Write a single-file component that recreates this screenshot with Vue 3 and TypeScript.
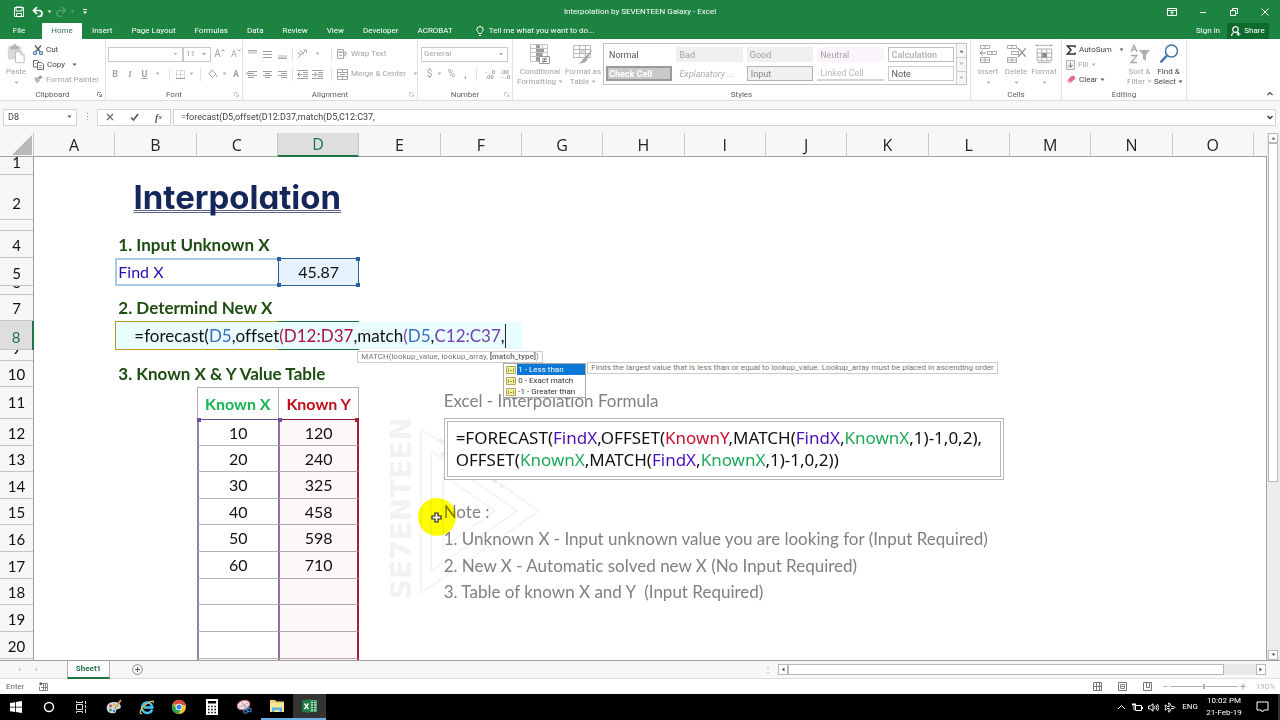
<script setup lang="ts">
import { ref } from 'vue'

interface Seg { t: string; k?: string }
interface Cell { id: string; span: number; cls: string; segs: Seg[] }
interface Row { n: number; h: number; label: string; tall: boolean; cells: Cell[] }

const cols = 'ABCDEFGHIJKLMNO'.split('')
const heights = [18, 45, 11, 27, 28, 9, 26, 29, 11, 26, 32, 27, 26, 27, 26, 27, 27, 26, 27, 27, 27]

const content: Record<string, { segs: Seg[]; cls?: string; span?: number }> = {
  B2: { segs: [{ t: 'Interpolation' }], cls: 'title', span: 3 },
  B4: { segs: [{ t: '1. Input Unknown X' }], cls: 'heading' },
  B5: { segs: [{ t: 'Find X' }], cls: 'find', span: 2 },
  D5: { segs: [{ t: '45.87' }], cls: 'center ref' },
  B7: { segs: [{ t: '2. Determind New X' }], cls: 'heading' },
  B8: { segs: [], cls: 'editing', span: 2 },
  D8: { segs: [], cls: 'active' },
  B10: { segs: [{ t: '3. Known X & Y Value Table' }], cls: 'heading' },
  C11: { segs: [{ t: 'Known X' }], cls: 'center known green' },
  D11: { segs: [{ t: 'Known Y' }], cls: 'center known red' },
  E11: { segs: [], cls: 'anchor' },
  F11: { segs: [{ t: 'Excel - Interpolation Formula' }], cls: 'grey anchor raised' },
  F15: { segs: [{ t: 'Note :' }], cls: 'grey anchor' },
  F16: { segs: [{ t: '1. Unknown X - Input unknown value you are looking for (Input Required)' }], cls: 'grey' },
  F17: { segs: [{ t: '2. New X - Automatic solved new X (No Input Required)' }], cls: 'grey' },
  F18: { segs: [{ t: '3. Table of known X and Y  (Input Required)' }], cls: 'grey' },
}
const data = [[10, 120], [20, 240], [30, 325], [40, 458], [50, 598], [60, 710]]

const rows: Row[] = heights.map((h, i) => {
  const n = i + 1
  const cells: Cell[] = []
  for (let c = 0; c < cols.length; c++) {
    const id = cols[c] + n
    const e = content[id]
    let cls = e?.cls ?? ''
    let segs = e?.segs ?? []
    if (n >= 12 && (c === 2 || c === 3)) {
      cls = 'center anchor ' + (c === 2 ? 'xs' : 'ys') + (n === 12 ? ' first' : '')
      const d = data[n - 12]
      if (d) segs = [{ t: String(d[c - 2]) }]
    }
    cells.push({ id, span: e?.span ?? 1, cls, segs })
    if (e?.span) c += e.span - 1
  }
  return { n, h, label: n === 3 ? '' : String(n), tall: n === 2 || n === 11, cells }
})

const editSegs: Seg[] = [
  { t: '=forecast(' }, { t: 'D5', k: 'c-blue' }, { t: ',offset' }, { t: '(D12:D37', k: 'c-crimson' },
  { t: ',match' }, { t: '(', k: 'c-purple' }, { t: 'D5', k: 'c-blue' }, { t: ',' }, { t: 'C12:C37', k: 'c-purple' }, { t: ',' },
]
const boxLines: Seg[][] = [
  [{ t: '=FORECAST(' }, { t: 'FindX', k: 'c-violet' }, { t: ',OFFSET(' }, { t: 'KnownY', k: 'c-red' }, { t: ',MATCH(' },
    { t: 'FindX', k: 'c-violet' }, { t: ',' }, { t: 'KnownX', k: 'c-green' }, { t: ',1)-1,0,2),' }],
  [{ t: 'OFFSET(' }, { t: 'KnownX', k: 'c-green' }, { t: ',MATCH(' }, { t: 'FindX', k: 'c-violet' }, { t: ',' },
    { t: 'KnownX', k: 'c-green' }, { t: ',1)-1,0,2))' }],
]
const matchTypes = ['1 - Less than', '0 - Exact match', '-1 - Greater than']
const tabs = ['File', 'Home', 'Insert', 'Page Layout', 'Formulas', 'Data', 'Review', 'View', 'Developer', 'ACROBAT']
const styles = ['Normal', 'Bad', 'Good', 'Neutral', 'Calculation', 'Check Cell', 'Explanatory ...', 'Input', 'Linked Cell', 'Note']
const formula = ref('=forecast(D5,offset(D12:D37,match(D5,C12:C37,')
const nameBox = ref('D8')
const zoom = ref(50)

const g = 'fill="none" stroke="#a8a8a8"'
const lines = (ys: number[][]) => ys.map(([y, a, b]) => `<path d="M${a} ${y}.5H${b}" stroke="#a0a0a0"/>`).join('')
const icons: Record<string, [number, number, string]> = {
  save: [12, 12, '<path d="M1.5 1.5h9v9h-9z" fill="none" stroke="#fff"/><path d="M3 1h6v4H3z" fill="none" stroke="#fff"/><path d="M3.500 11V7.500h5V11" fill="none" stroke="#fff"/>'],
  undo: [12, 12, '<path d="M5 1L1.500 4.500 5 8M2 4.500h5a3 3 0 0 1 0 6H5.500" fill="none" stroke="#fff" stroke-width="1.700"/>'],
  redo: [12, 12, '<path d="M7 1l3.500 3.500L7 8M10 4.500H5a3 3 0 0 0 0 6h1.500" fill="none" stroke="#4fa06c" stroke-width="1.500"/>'],
  caretW: [5, 4, '<path d="M.5 .5h4L2.500 3z" fill="#e4f2e8"/>'],
  caretG: [5, 4, '<path d="M.5 .5h4L2.500 3z" fill="#55a572"/>'],
  custom: [6, 6, '<path d="M1 .5h4" stroke="#fff"/><path d="M1 2.500h4L3 5z" fill="#fff"/>'],
  caret: [5, 4, '<path d="M.5 .5h4L2.500 3z" fill="#5a5a5a"/>'],
  caretL: [5, 4, '<path d="M.5 .5h4L2.500 3z" fill="#b4b4b4"/>'],
  chevU: [6, 5, '<path d="M.5 4L3 1.500 5.500 4" fill="none" stroke="#444" stroke-width="1.200"/>'],
  chevD: [6, 5, '<path d="M.5 1L3 3.500 5.500 1" fill="none" stroke="#333" stroke-width="1.400"/>'],
  tri: [5, 4, '<path d="M.5 3.500h4L2.500 1z" fill="#666"/>'],
  triL: [4, 5, '<path d="M3.500 .5v4L1 2.500z" fill="#444"/>'],
  triR: [4, 5, '<path d="M.5 .5v4L3 2.500z" fill="#444"/>'],
  navL: [4, 5, '<path d="M3.500 .5v4L1 2.500z" fill="#c8c8c8"/>'],
  navR: [4, 5, '<path d="M.5 .5v4L3 2.500z" fill="#c8c8c8"/>'],
  grow: [4, 3, '<path d="M.5 2.500L2 .8 3.500 2.500" fill="none" stroke="#999"/>'],
  shrink: [4, 3, '<path d="M.5 .5L2 2.200 3.500 .5" fill="none" stroke="#999"/>'],
  opts: [10, 8, '<path d="M.5 .5h9v7h-9zM.5 2.500h9" fill="none" stroke="#fff"/><path d="M5 7V3.500M3.500 5L5 3.500 6.500 5" fill="none" stroke="#fff"/>'],
  min: [8, 8, '<path d="M1 4.500h6" stroke="#fff"/>'],
  max: [8, 8, '<path d="M.5 2.500h5v5h-5zM2.500 2.500v-2h5v5h-2" fill="none" stroke="#fff"/>'],
  close: [8, 8, '<path d="M.5 .5l7 7M7.500 .5l-7 7" stroke="#fff"/>'],
  bulb: [8, 11, '<path d="M2.800 7.500C2.800 6 .8 5.500 .8 3.700a3.200 3.200 0 0 1 6.400 0C7.200 5.500 5.200 6 5.200 7.500zM2.800 9.500h2.400" fill="none" stroke="#fff"/>'],
  person: [10, 10, '<circle cx="4.500" cy="3.500" r="2.800" fill="none" stroke="#fff" stroke-width="1.200"/><path d="M.5 10c0-2 1-3 2.500-3.500M6 6.500l1 .5M5.500 8h4M7.500 6v4" fill="none" stroke="#fff" stroke-width="1.200"/>'],
  paste: [20, 22, '<path d="M1 3h15v14H1z" fill="#d9d9d9"/><path d="M4 2h9v4H4z" fill="#b4b4b4"/><path d="M6.500 2a2 2 0 0 1 4 0" fill="#b4b4b4"/><path d="M9.500 8.500h6l3.500 3.500v8.500H9.500z" fill="#fff" stroke="#b8b8b8"/><path d="M15.500 8.500V12H19" fill="none" stroke="#b8b8b8"/>'],
  cut: [10, 10, '<path d="M2 .5l5 6M8 .5l-5 6" stroke="#555" stroke-width="1.300"/><circle cx="2" cy="8" r="1.500" fill="none" stroke="#3c7ab8" stroke-width="1.200"/><circle cx="8" cy="8" r="1.500" fill="none" stroke="#3c7ab8" stroke-width="1.200"/>'],
  copy: [11, 10, '<path d="M.5 .5h4l1.500 1.500v5H.5z" fill="#fff" stroke="#6a6a6a"/><path d="M4.500 2.500h4l2 2v5h-6z" fill="#fff" stroke="#6a6a6a"/><path d="M6 5.500h3M6 7.500h3M2 3.500h1.500" stroke="#9a9a9a"/>'],
  painter: [10, 9, '<path d="M5 2l3-1.500 1.500 2-3 2z" fill="#999"/><path d="M1 3l4-1 2 3.500-3 3L2.500 6z" fill="#b8b8b8"/>'],
  launch: [5, 5, '<path d="M.5 4V.5H4M2 2l2.500 2.500M4.500 2v2.500H2" fill="none" stroke="#777" stroke-width=".8"/>'],
  launchL: [5, 5, '<path d="M.5 4V.5H4M2 2l2.500 2.500M4.500 2v2.500H2" fill="none" stroke="#c4c4c4" stroke-width=".8"/>'],
  border: [9, 9, '<path d="M.5 .5h8v8h-8zM4.500 .5v8M.5 4.500h8" fill="none" stroke="#bbb" stroke-dasharray="1 1"/><path d="M0 8.500h9" stroke="#999"/>'],
  fill: [10, 10, `<path d="M4 1l4 4-3.500 3.500L1 5z" ${g}/><path d="M8.500 5.500q1.500 2 0 2.500-1.200-.5 0-2.500" fill="#a8a8a8"/>`],
  alT: [9, 9, '<path d="M0 1h9v3H0z" fill="#d8d8d8"/><path d="M0 .5h9" stroke="#aaa"/>'],
  alM: [9, 9, lines([[1, 0, 9], [4, 0, 9], [7, 0, 9]])],
  alB: [9, 9, '<path d="M0 5h9v3H0z" fill="#d8d8d8"/><path d="M0 8.500h9" stroke="#aaa"/>'],
  left: [9, 9, lines([[1, 0, 9], [3, 0, 6], [5, 0, 9], [7, 0, 6]])],
  mid: [9, 9, lines([[1, 0, 9], [3, 2, 7], [5, 0, 9], [7, 2, 7]])],
  right: [9, 9, lines([[1, 0, 9], [3, 3, 9], [5, 0, 9], [7, 3, 9]])],
  orient: [11, 10, '<path d="M1 9L9 1M6.500 1H9.500V4" fill="none" stroke="#a8a8a8"/><path d="M1 3.500l3 3M3 1.500l4 4" stroke="#bbb" stroke-width="1.500"/>'],
  outd: [11, 9, lines([[0, 0, 11], [2, 6, 11], [4, 6, 11], [6, 6, 11], [8, 0, 11]]) + '<path d="M3 2L.5 4.500 3 7M1 4.500h4" fill="none" stroke="#999"/>'],
  ind: [11, 9, lines([[0, 0, 11], [2, 6, 11], [4, 6, 11], [6, 6, 11], [8, 0, 11]]) + '<path d="M2.500 2L5 4.500 2.500 7M0 4.500h4" fill="none" stroke="#999"/>'],
  wrap: [11, 10, `<path d="M.5 .5h6v9h-6zM2 3.500h3M2 6.500h3M.5 3h8.500v3H7M8 4.500L6.500 6 8 7.500" ${g}/>`],
  merge: [11, 11, `<path d="M.5 .5h10v10H.5zM.5 3.500h10M.5 7.500h10M5.500 .5v3M5.500 7.500v3M3 5.500h5" ${g}/>`],
  cond: [20, 20, '<path d="M.5 .5h17v17H.5zM.5 4.500h17M.5 8.500h17M.5 12.500h17M6.500 .5v17M12.500 .5v17" fill="none" stroke="#c4c4c4"/><path d="M6 1h4v3H6zM6 5h8v3H6zM6 9h6v3H6zM6 13h3v4H6z" fill="#9c9c9c"/><path d="M9.500 12.500h10v7h-10z" fill="#fff" stroke="#999"/><path d="M12 15h5M12 17.500h5M16 13.500l-3 5" stroke="#777"/>'],
  ftable: [20, 20, '<path d="M.5 1.500h17v12H.5zM.5 5.500h17M.5 9.500h17M6.500 1.500v12M12.500 1.500v12" fill="none" stroke="#b8b8b8"/><path d="M7 6h5v3H7z" fill="#ddd"/><path d="M19.500 5L12 13.500l2 1.500z" fill="#999"/><path d="M12 13.500l2.500 2q-1 4-9.500 4 4-1.500 4.500-4z" fill="#aaa"/>'],
  insert: [18, 20, `<path d="M1.500 1.500h9v3h-9zM6 1.500v3M8.500 7.500h9v3h-9zM13 7.500v3M1.500 13.500h9v5h-9zM6 13.500v5M1.500 16h9" ${g}/><path d="M1 9h6M3.500 6.500L1 9l2.500 2.500" fill="none" stroke="#888"/>`],
  del: [20, 20, `<path d="M1.500 1.500h9v3h-9zM6 1.500v3M5.500 7.500h7v3h-7zM1.500 13.500h9v5h-9zM6 13.500v5M1.500 16h9" ${g}/><path d="M12 4l8 9M20 4l-8 9" stroke="#999" stroke-width="1.400"/>`],
  format: [20, 22, `<path d="M2.500 5.500h16v13h-16zM2.500 10h16M2.500 14.500h16M7.500 5.500v13M13 5.500v13M1 1.500h18M3 0L1 1.500 3 3M17 0l2 1.500L17 3M3 20.500h14" ${g}/><path d="M8 10h5v5H8z" fill="#888"/>`],
  sigma: [10, 10, '<path d="M9 2.500V1H1.500L5 5 1.500 9H9V7.500" fill="none" stroke="#333" stroke-width="1.500"/>'],
  fdown: [9, 10, '<path d="M.5 .5h8v9h-8z" fill="#eee" stroke="#b4b4b4"/><path d="M4.500 2.500V7M2.500 5l2 2.500 2-2.500" fill="none" stroke="#888"/>'],
  eraser: [10, 9, '<path d="M4.500 1.500L8 .5l1.500 3L5 7.500 1.500 5.500z" fill="#e2708f"/><path d="M1.500 5.500L5 7.500 3.500 8.500 1 7.500z" fill="#f3bccb"/>'],
  sort: [20, 20, '<path d="M1 8l3-7 3 7M2 5.500h4M1 11.500h6L1 18.500h6" fill="none" stroke="#a8a8a8" stroke-width="1.300"/><path d="M9 6h11l-4 5v6l-3-2v-4z" fill="#b0b0b0"/>'],
  find: [20, 20, '<circle cx="12.500" cy="7" r="6" fill="#fff" stroke="#3b72b0" stroke-width="1.500"/><path d="M8 11.500L1.500 18.500" stroke="#3b72b0" stroke-width="2.500"/>'],
  x: [8, 8, '<path d="M1 1l6 6M7 1L1 7" stroke="#666" stroke-width="1.200"/>'],
  check: [9, 8, '<path d="M1 4.500l2.500 2.500L8 1" fill="none" stroke="#555" stroke-width="1.600"/>'],
  plus: [11, 11, '<circle cx="5.500" cy="5.500" r="4.800" fill="#fff" stroke="#777" stroke-width=".9"/><path d="M5.500 3v5M3 5.500h5" stroke="#555"/>'],
  macro: [9, 9, '<path d="M2.500 1.500h6v7h-8v-4M2 5.500h6M4.500 2v6M6.500 2v6" fill="none" stroke="#888"/><circle cx="1.800" cy="1.800" r="1.500" fill="#666"/>'],
  vNormal: [9, 9, '<path d="M.5 .5h8v8h-8zM.5 4.500h8M3.500 .5v8M6.500 .5v8" fill="none" stroke="#777"/>'],
  vPage: [9, 9, '<path d="M.5 .5h8v8h-8z" fill="none" stroke="#777"/><path d="M2.500 2.500h4v4h-4zM3 4.500h3" fill="none" stroke="#888"/>'],
  vBreak: [9, 9, '<path d="M.5 .5h8v8h-8zM3.500 .5v5h3v-5" fill="none" stroke="#777"/>'],
  pick: [10, 8, '<path d="M.5 .5h9v7h-9z" fill="#f6efa0" stroke="#b3a85c"/><path d="M2 5.500h1M4 4.500h2M7 5.500h1M2.500 2.500v3M7.500 2.500v3" stroke="#9c9550"/>'],
  win: [12, 12, '<path d="M0 2l5-.8v4.600H0zM5.800 1L12 0v5.800H5.800zM0 6.500h5v4.600L0 10.300zM5.800 6.500H12V12l-6.200-.9z" fill="#fff"/>'],
  cortana: [12, 12, '<circle cx="6" cy="6" r="4.500" fill="none" stroke="#fff" stroke-width="1.400"/>'],
  task: [12, 12, '<path d="M1.500 3.500h6v5h-6zM1.500 0v1.500h6V0M1.500 12v-1.500h6V12" fill="none" stroke="#ddd"/><path d="M10.500 0v3M10.500 4v3M10.500 8v4" stroke="#ddd"/>'],
  paint: [16, 16, '<path d="M8 3C3 3 0 6 .8 10c.6 4 5 5 8 4 2-.8.5-2.500 2-3.500s4 .2 4-3C14.800 5 12 3 8 3z" fill="#c5dbe8"/><circle cx="4.500" cy="7" r="1.400" fill="#d3473c"/><circle cx="8" cy="5.500" r="1.200" fill="#e8b33d"/><circle cx="4.500" cy="11" r="1.400" fill="#4b9b57"/><circle cx="8" cy="12" r="1.200" fill="#3d76c4"/><path d="M15 1L8.500 10" stroke="#dca052" stroke-width="1.800"/>'],
  ie: [16, 16, '<path d="M13.200 10.500A5.300 5.300 0 1 1 13.500 8.500H5" fill="none" stroke="#49c5f1" stroke-width="2.400"/><path d="M3 14.500C0 15.500 1 11 4.500 7.500S15.500-.5 14.300 4" fill="none" stroke="#f2c84a" stroke-width="1.200"/>'],
  chrome: [16, 16, '<circle cx="8" cy="8" r="7" fill="#f4c432"/><path d="M8 8L2 4.300A7 7 0 0 1 14.800 6H8z" fill="#dd4b3e"/><path d="M2 4.300A7 7 0 0 0 7.300 15L10.500 9.500 8 8 5 9z" fill="#2fa455"/><circle cx="8" cy="8" r="3.300" fill="#fff"/><circle cx="8" cy="8" r="2.500" fill="#4285e8"/>'],
  calc: [14, 16, '<path d="M1 0h12v16H1z" fill="#fff"/><path d="M3 2h8v2.500H3z" fill="#000"/><path d="M3 7.500h8M3 10.500h8M3 13.500h8" stroke="#000" stroke-width="1.500" stroke-dasharray="1.500 1.700"/>'],
  snip: [16, 16, '<ellipse cx="7.500" cy="6" rx="6.500" ry="4.500" transform="rotate(-20 7.500 6)" fill="#f0e2e4" stroke="#c66e78"/><path d="M3 8l9-4M6 3l4 6" stroke="#d08a92" stroke-width=".8"/><circle cx="9.500" cy="12.500" r="1.800" fill="none" stroke="#3a7cc0" stroke-width="1.300"/><circle cx="13.500" cy="11" r="1.800" fill="none" stroke="#3a7cc0" stroke-width="1.300"/><path d="M10 11L8.500 7M12.500 9.500L10 6.500" stroke="#7b9fc4"/>'],
  folder: [16, 14, '<path d="M1 1h5l1.500 1.500H15V13H1z" fill="#f5d26b"/><path d="M1 4h14v9H1z" fill="#fbe596"/><path d="M3 13V8.500h10V13h-2.500v-2h-5v2z" fill="#57b4de"/>'],
  excel: [16, 14, '<path d="M8 1.500h6.500v11H8z" fill="#217346" stroke="#4ea673"/><path d="M9 3.500h2M12 3.500h2M9 6h2M12 6h2M9 8.500h2M12 8.500h2M9 11h2M12 11h2" stroke="#c9e6d4" stroke-width="1.300"/><path d="M0 1.500L8.500 0v14L0 12.500z" fill="#1e7d45"/><path d="M2.500 4.500l4 5.500M6.500 4.500l-4 5.500" stroke="#fff" stroke-width="1.300"/>'],
  up: [9, 6, '<path d="M1 5l3.500-3.500L8 5" fill="none" stroke="#fff"/>'],
  batt: [11, 9, '<path d="M3.500 2.500h6v5h-6zM10.500 4v2" fill="none" stroke="#fff"/><path d="M0 1.500h4M1 0v3M3 0v3M2 3v4" stroke="#fff"/>'],
  vol: [11, 9, '<path d="M.5 3h2L5 .8v7.400L2.500 6h-2z" fill="none" stroke="#fff"/><path d="M6.500 3q1 1.500 0 3M8 2q1.800 2.500 0 5M9.500 1q2.500 3.500 0 7" fill="none" stroke="#fff" stroke-width=".9"/>'],
  plane: [12, 11, '<path d="M11 5.500q-.5-1-2-1H7.500L5.500 1H4.500l.8 3.500H3L1.800 3H1l.7 2.500L1 8h.8L3 6.500h2.300L4.500 10h1l2-3.500H9q1.500 0 2-1z" fill="none" stroke="#fff" stroke-width=".9"/>'],
  notif: [13, 12, '<path d="M1 1h11v8H8L6.500 11 5 9H1z" fill="none" stroke="#fff"/>'],
  cross: [11, 11, '<path d="M4 1h3v3h3v3H7v3H4V7H1V4h3z" fill="#fff" stroke="#222" stroke-width="1.200"/>'],
}
const box = (k: string) => `0 0 ${icons[k][0]} ${icons[k][1]}`
const apps = ['win', 'cortana', 'task', 'paint', 'ie', 'chrome', 'calc', 'snip', 'folder', 'excel']
const appNames = ['Start', 'Search', 'Task view', 'Paint', 'Internet Explorer', 'Chrome', 'Calculator', 'Snipping Tool', 'Explorer', 'Excel']
</script>

<template>
  <div class="app">
    <header class="titlebar">
      <div class="quick">
        <button v-for="k in ['save', 'undo', 'caretW', 'redo', 'caretG', 'custom']" :key="k" :aria-label="k"><svg :width="icons[k][0]" :height="icons[k][1]" :viewBox="box(k)" v-html="icons[k][2]" /></button>
      </div>
      <div class="doc">Interpolation by SEVENTEEN Galaxy - Excel</div>
      <div class="wins">
        <button v-for="k in ['opts', 'min', 'max', 'close']" :key="k" :aria-label="k"><svg :width="icons[k][0]" :height="icons[k][1]" :viewBox="box(k)" v-html="icons[k][2]" /></button>
      </div>
    </header>
    <nav class="tabs">
      <button v-for="t in tabs" :key="t" :class="{ on: t === 'Home', file: t === 'File' }">{{ t }}</button>
      <button class="tell"><svg width="8" height="11" :viewBox="box('bulb')" v-html="icons.bulb[2]" />Tell me what you want to do...</button>
      <span class="grow"></span>
      <button>Sign in</button>
      <button class="share"><svg width="10" height="10" :viewBox="box('person')" v-html="icons.person[2]" />Share</button>
    </nav>

    <section class="ribbon">
      <div class="group clip">
        <div class="body">
          <button class="big dim"><svg width="20" height="22" :viewBox="box('paste')" v-html="icons.paste[2]" />Paste<svg width="5" height="4" :viewBox="box('caretL')" v-html="icons.caretL[2]" /></button>
          <div class="stack">
            <button><svg width="10" height="10" :viewBox="box('cut')" v-html="icons.cut[2]" />Cut</button>
            <button><svg width="11" height="10" :viewBox="box('copy')" v-html="icons.copy[2]" />Copy<svg class="drop" width="5" height="4" :viewBox="box('caret')" v-html="icons.caret[2]" /></button>
            <button class="dim"><svg width="10" height="9" :viewBox="box('painter')" v-html="icons.painter[2]" />Format Painter</button>
          </div>
        </div>
        <div class="label">Clipboard<svg width="5" height="5" :viewBox="box('launch')" v-html="icons.launch[2]" /></div>
      </div>

      <div class="group font dim">
        <div class="body rows">
          <div class="r1">
            <select class="fname" aria-label="Font"><option></option></select>
            <select class="fsize" aria-label="Font size"><option>11</option></select>
            <button class="ga">A<svg width="4" height="3" :viewBox="box('grow')" v-html="icons.grow[2]" /></button>
            <button class="gb">A<svg width="4" height="3" :viewBox="box('shrink')" v-html="icons.shrink[2]" /></button>
          </div>
          <div class="r2">
            <button><b>B</b></button><button><b><i class="ser">I</i></b></button><button><b><u>U</u></b></button>
            <svg width="5" height="4" :viewBox="box('caretL')" v-html="icons.caretL[2]" /><i class="sep"></i>
            <button aria-label="Borders"><svg width="9" height="9" :viewBox="box('border')" v-html="icons.border[2]" /></button>
            <svg width="5" height="4" :viewBox="box('caretL')" v-html="icons.caretL[2]" /><i class="sep"></i>
            <button aria-label="Fill"><svg width="10" height="10" :viewBox="box('fill')" v-html="icons.fill[2]" /></button>
            <svg width="5" height="4" :viewBox="box('caretL')" v-html="icons.caretL[2]" />
            <button><b>A</b></button>
            <svg width="5" height="4" :viewBox="box('caretL')" v-html="icons.caretL[2]" />
          </div>
        </div>
        <div class="label">Font<svg width="5" height="5" :viewBox="box('launchL')" v-html="icons.launchL[2]" /></div>
      </div>

      <div class="group align dim">
        <div class="body rows">
          <div class="r3">
            <button v-for="k in ['alT', 'alM', 'alB']" :key="k" :aria-label="k"><svg width="9" height="9" :viewBox="box(k)" v-html="icons[k][2]" /></button>
            <i class="sep"></i>
            <button aria-label="Orientation"><svg width="11" height="10" :viewBox="box('orient')" v-html="icons.orient[2]" /></button>
            <svg width="5" height="4" :viewBox="box('caretL')" v-html="icons.caretL[2]" /><i class="sep"></i>
            <button class="wide"><svg width="11" height="10" :viewBox="box('wrap')" v-html="icons.wrap[2]" />Wrap Text</button>
          </div>
          <div class="r3">
            <button v-for="k in ['left', 'mid', 'right']" :key="k" :aria-label="k"><svg width="9" height="9" :viewBox="box(k)" v-html="icons[k][2]" /></button>
            <i class="sep"></i>
            <button v-for="k in ['outd', 'ind']" :key="k" :aria-label="k"><svg width="11" height="9" :viewBox="box(k)" v-html="icons[k][2]" /></button>
            <i class="sep"></i>
            <button class="wide"><svg width="11" height="11" :viewBox="box('merge')" v-html="icons.merge[2]" />Merge &amp; Center<svg class="drop" width="5" height="4" :viewBox="box('caretL')" v-html="icons.caretL[2]" /></button>
          </div>
        </div>
        <div class="label">Alignment<svg width="5" height="5" :viewBox="box('launchL')" v-html="icons.launchL[2]" /></div>
      </div>

      <div class="group number dim">
        <div class="body rows">
          <div class="r0"><select class="fmt" aria-label="Number format"><option>General</option></select></div>
          <div class="r4">
            <button class="sym">$</button><svg width="5" height="4" :viewBox="box('caretL')" v-html="icons.caretL[2]" /><button class="sym">%</button><button class="sym"><b>,</b></button><i class="sep"></i>
            <button class="dec">←.0<br>.00</button><button class="dec">.00<br>→.0</button>
          </div>
        </div>
        <div class="label">Number<svg width="5" height="5" :viewBox="box('launchL')" v-html="icons.launchL[2]" /></div>
      </div>

      <div class="group styles dim">
        <div class="body">
          <button class="big cf"><svg width="20" height="20" :viewBox="box('cond')" v-html="icons.cond[2]" />Conditional<span>Formatting <svg width="5" height="4" :viewBox="box('caretL')" v-html="icons.caretL[2]" /></span></button>
          <button class="big ft"><svg width="20" height="20" :viewBox="box('ftable')" v-html="icons.ftable[2]" />Format as<span>Table <svg width="5" height="4" :viewBox="box('caretL')" v-html="icons.caretL[2]" /></span></button>
          <div class="gallery">
            <div class="swatches">
              <button v-for="(s, i) in styles" :key="s" :class="'s' + i">{{ s }}</button>
            </div>
            <div class="spin">
              <button aria-label="Up"><svg width="5" height="4" :viewBox="box('tri')" v-html="icons.tri[2]" /></button>
              <button aria-label="Down"><svg width="5" height="4" :viewBox="box('caretL')" v-html="icons.caretL[2]" /></button>
              <button aria-label="More"><svg width="5" height="4" :viewBox="box('caretL')" v-html="icons.caretL[2]" /></button>
            </div>
          </div>
        </div>
        <div class="label">Styles</div>
      </div>

      <div class="group cells dim">
        <div class="body even">
          <button class="big"><svg width="18" height="20" :viewBox="box('insert')" v-html="icons.insert[2]" />Insert<svg width="5" height="4" :viewBox="box('caretL')" v-html="icons.caretL[2]" /></button>
          <button class="big"><svg width="20" height="20" :viewBox="box('del')" v-html="icons.del[2]" />Delete<svg width="5" height="4" :viewBox="box('caretL')" v-html="icons.caretL[2]" /></button>
          <button class="big"><svg width="20" height="20" :viewBox="box('format')" v-html="icons.format[2]" />Format<svg width="5" height="4" :viewBox="box('caretL')" v-html="icons.caretL[2]" /></button>
        </div>
        <div class="label">Cells</div>
      </div>

      <div class="group edit">
        <div class="body">
          <div class="stack">
            <button><svg width="10" height="10" :viewBox="box('sigma')" v-html="icons.sigma[2]" />AutoSum<svg class="drop" width="5" height="4" :viewBox="box('caret')" v-html="icons.caret[2]" /></button>
            <button class="dim"><svg width="9" height="10" :viewBox="box('fdown')" v-html="icons.fdown[2]" />Fill<svg width="5" height="4" :viewBox="box('caretL')" v-html="icons.caretL[2]" /></button>
            <button><svg width="10" height="9" :viewBox="box('eraser')" v-html="icons.eraser[2]" />Clear<svg width="5" height="4" :viewBox="box('caret')" v-html="icons.caret[2]" /></button>
          </div>
          <button class="big sf dim"><svg width="20" height="20" :viewBox="box('sort')" v-html="icons.sort[2]" />Sort &amp;<span>Filter <svg width="5" height="4" :viewBox="box('caretL')" v-html="icons.caretL[2]" /></span></button>
          <button class="big sf"><svg width="20" height="20" :viewBox="box('find')" v-html="icons.find[2]" />Find &amp;<span>Select <svg width="5" height="4" :viewBox="box('caret')" v-html="icons.caret[2]" /></span></button>
        </div>
        <div class="label">Editing</div>
      </div>
      <div class="rest"><button aria-label="Collapse ribbon"><svg width="6" height="5" :viewBox="box('chevU')" v-html="icons.chevU[2]" /></button></div>
    </section>

    <section class="fbar">
      <div class="namebox"><input v-model="nameBox" aria-label="Name box"><svg width="5" height="4" :viewBox="box('caret')" v-html="icons.caret[2]" /></div>
      <span class="dots">⋮</span>
      <div class="fbtns">
        <button aria-label="Cancel"><svg width="8" height="8" :viewBox="box('x')" v-html="icons.x[2]" /></button>
        <button aria-label="Enter"><svg width="9" height="8" :viewBox="box('check')" v-html="icons.check[2]" /></button>
        <button class="fx">f<small>x</small></button>
      </div>
      <div class="finput"><input v-model="formula" aria-label="Formula"><svg width="6" height="5" :viewBox="box('chevD')" v-html="icons.chevD[2]" /></div>
    </section>

    <main class="sheet">
      <div class="grid">
        <table>
          <colgroup><col class="rh"><col v-for="c in cols" :key="c"><col class="tail"></colgroup>
          <thead>
            <tr>
              <th class="corner"><svg width="20" height="20" viewBox="0 0 20 20"><path d="M20 0v20H0z" fill="#b9b9b9" /></svg></th>
              <th v-for="c in cols" :key="c" :class="{ sel: c === 'D' }">{{ c }}</th>
              <th class="last"></th>
            </tr>
          </thead>
          <tbody>
            <tr v-for="r in rows" :key="r.n">
              <th :class="{ sel: r.n === 8 }"><div class="rl" :class="{ tall: r.tall }" :style="{ height: r.h + 'px' }">{{ r.label }}</div></th>
              <td v-for="c in r.cells" :key="c.id" :colspan="c.span" :class="c.cls">
                <template v-if="c.id === 'E11'">
                  <div class="mark">SE7ENTEEN</div>
                  <svg class="tri" width="126" height="174" viewBox="0 0 126 174"><g fill="none" stroke="#f5f5f5" stroke-width="2"><path d="M2 4l118 82L2 168z" /><path d="M12 26l86 60-86 60z" /><path d="M24 50l52 36-52 36z" /></g><path d="M20 14l64 48M22 28l30 24" stroke="#ececec" stroke-width="3" stroke-dasharray="6 5" /></svg>
                </template>
                <span v-for="(s, i) in c.segs" :key="i" class="txt">{{ s.t }}</span>
                <template v-if="c.id === 'D5'"><i class="h tl blue"></i><i class="h tr blue"></i><i class="h bl blue"></i><i class="h br blue"></i></template>
                <i v-if="c.id === 'C12'" class="h tl purple"></i>
                <template v-if="c.id === 'D12'"><i class="h tl purple"></i><i class="h tr crimson"></i></template>
                <template v-if="c.id === 'B8'">
                  <div class="editor"><span v-for="(s, i) in editSegs" :key="i" :class="s.k">{{ s.t }}</span><i class="beam"></i></div>
                  <div class="tip fn">MATCH(lookup_value, lookup_array, <b>[match_type]</b>)</div>
                  <ul class="menu">
                    <li v-for="(m, i) in matchTypes" :key="m" :class="{ on: i === 0 }"><svg width="10" height="8" :viewBox="box('pick')" v-html="icons.pick[2]" />{{ m }}</li>
                  </ul>
                  <div class="tip desc">Finds the largest value that is less than or equal to lookup_value. Lookup_array must be placed in ascending order</div>
                </template>
                <div v-if="c.id === 'F11'" class="fbox">
                  <div v-for="(l, i) in boxLines" :key="i"><span v-for="(s, j) in l" :key="j" :class="s.k">{{ s.t }}</span></div>
                </div>
                <div v-if="c.id === 'F15'" class="spot"><svg width="11" height="11" :viewBox="box('cross')" v-html="icons.cross[2]" /></div>
              </td>
              <td class="blank"></td>
            </tr>
          </tbody>
        </table>
      </div>
      <div class="vbar">
        <button aria-label="Scroll up"><svg width="5" height="4" :viewBox="box('tri')" v-html="icons.tri[2]" /></button>
        <div class="thumb"></div>
        <button class="down" aria-label="Scroll down"><svg width="5" height="4" :viewBox="box('caret')" v-html="icons.caret[2]" /></button>
      </div>
    </main>

    <section class="sheets">
      <div class="navs">
        <button aria-label="Previous sheet"><svg width="4" height="5" :viewBox="box('navL')" v-html="icons.navL[2]" /></button>
        <button aria-label="Next sheet"><svg width="4" height="5" :viewBox="box('navR')" v-html="icons.navR[2]" /></button>
      </div>
      <button class="stab">Sheet1</button>
      <button class="add" aria-label="New sheet"><svg width="11" height="11" :viewBox="box('plus')" v-html="icons.plus[2]" /></button>
      <span class="grow"></span>
      <span class="dots">⋮</span>
      <div class="hbar">
        <button aria-label="Scroll left"><svg width="4" height="5" :viewBox="box('triL')" v-html="icons.triL[2]" /></button>
        <div class="thumb"></div>
        <button class="end" aria-label="Scroll right"><svg width="4" height="5" :viewBox="box('triR')" v-html="icons.triR[2]" /></button>
      </div>
    </section>

    <section class="status">
      <span>Enter</span>
      <svg class="macro" width="9" height="9" :viewBox="box('macro')" v-html="icons.macro[2]" />
      <span class="grow"></span>
      <div class="views">
        <button v-for="k in ['vNormal', 'vPage', 'vBreak']" :key="k" :aria-label="k"><svg width="9" height="9" :viewBox="box(k)" v-html="icons[k][2]" /></button>
      </div>
      <button class="zb">−</button>
      <input v-model="zoom" type="range" aria-label="Zoom">
      <button class="zb">+</button>
      <span class="pct">190%</span>
    </section>

    <footer class="taskbar">
      <div class="apps">
        <button v-for="(k, i) in apps" :key="k" class="appb" :class="{ open: i > 7, current: i === 9 }" :aria-label="appNames[i]"><svg :width="icons[k][0]" :height="icons[k][1]" :viewBox="box(k)" v-html="icons[k][2]" /></button>
      </div>
      <span class="grow"></span>
      <div class="tray">
        <button v-for="k in ['up', 'batt', 'vol', 'plane']" :key="k" :aria-label="k"><svg :width="icons[k][0]" :height="icons[k][1]" :viewBox="box(k)" v-html="icons[k][2]" /></button>
      </div>
      <span class="lang">ENG</span>
      <div class="clock"><div>10:02 PM</div><div>21-Feb-19</div></div>
      <button class="notif" aria-label="Notifications"><svg width="13" height="12" :viewBox="box('notif')" v-html="icons.notif[2]" /></button>
    </footer>
  </div>
</template>

<style>
body { margin: 0; overflow: hidden; }
</style>

<style scoped>
.app { height: 100vh; display: flex; flex-direction: column; background: #fff; font-family: Roboto, "Open Sans", sans-serif; font-size: 8px; line-height: 10px; color: #444; overflow: hidden; }
.app * { box-sizing: border-box; }
button { border: 0; padding: 0; margin: 0; background: none; font: inherit; color: inherit; display: flex; align-items: center; justify-content: center; white-space: nowrap; }
input, select { font: inherit; color: inherit; border: 0; padding: 0; margin: 0; background: none; outline: 0; min-width: 0; }
svg { flex: none; display: block; }
.grow { flex: 1; }

.titlebar { display: grid; grid-template-columns: 1fr auto 1fr; align-items: center; height: 23px; background: #1c8341; color: #fff; flex: none; }
.quick { display: grid; grid-template-columns: 20px 18px 5px 18px 5px 20px; padding-left: 9px; height: 20px; align-items: center; }
.wins { display: grid; grid-template-columns: repeat(4, 31px); justify-content: end; height: 20px; }
.doc { padding-top: 1px; }
.tabs { display: flex; height: 16px; background: #1c8341; color: #fff; flex: none; padding-right: 11px; }
.tabs button { padding: 0 9px 0 10px; }
.tabs button.file { width: 42px; padding-right: 14px; }
.tabs button.on { background: #fff; color: #2f7a4b; width: 40px; padding: 0; }
.tabs button.tell { gap: 5px; padding-left: 14px; }
.tabs button.share { background: #0d6a2f; gap: 3px; padding: 0 5px; width: 42px; }
.tabs button:nth-last-child(2) { padding: 0 7px; }

.ribbon { display: flex; height: 62px; flex: none; border-bottom: 1px solid #dcdcdc; background: #fff; }
.group { display: flex; flex-direction: column; border-right: 1px solid #e2e2e2; flex: none; padding-top: 3px; }
.dim { color: #a3a3a3; }
.body { flex: 1; display: flex; }
.label { position: relative; height: 11px; text-align: center; color: #606060; line-height: 11px; }
.label svg { position: absolute; right: 3px; top: 3px; }
.big { flex-direction: column; justify-content: flex-start; padding-top: 2px; line-height: 10px; }
.big > svg:first-child { height: 20px; margin-bottom: 3px; }
.big > svg:last-child { margin-top: 4px; }
.big span { display: flex; align-items: center; gap: 2px; }
.stack { display: grid; grid-template-rows: repeat(3, 15px); justify-items: start; }
.stack button { gap: 3px; }
.drop { margin-left: 4px; }
.clip { width: 106px; }
.clip .big { width: 33px; padding-right: 1px; }
.font { width: 137px; }
.rows { flex-direction: column; padding-top: 2px; }
.rows > div { height: 20px; }
.r0 { display: flex; align-items: center; }
.r1 { display: grid; grid-template-columns: 75px 28px 17px 16px; align-items: center; padding-left: 2px; }
select { appearance: none; height: 15px; border: 1px solid #c9c9c9; padding-left: 2px; background: linear-gradient(45deg, transparent 50%, #b8b8b8 50%) right 6px center / 2px 2px no-repeat, linear-gradient(-45deg, transparent 50%, #b8b8b8 50%) right 4px center / 2px 2px no-repeat, #fff; }
.ga { font-size: 10px; }
.gb { font-size: 9px; }
.ga svg, .gb svg { align-self: flex-start; }
.r2 { display: grid; grid-template-columns: 14px 16px 13px 12px 12px 10px 13px 5px 19px 5px 18px 5px; justify-items: center; align-items: center; padding-left: 2px; }
.r2 button { font-size: 9px; }
.ser { font-family: "Liberation Serif", serif; }
.sep { width: 1px; height: 13px; background: #e2e2e2; }
.align { width: 175px; }
.r3 { display: grid; grid-template-columns: 15px 15px 15px 5px 15px 15px 12px 1fr; padding-left: 2px; align-items: center; justify-items: center; }
.r3 .wide { justify-self: start; gap: 3px; }
.number { width: 95px; }
.fmt { width: 87px; margin-left: 3px; }
.r4 { display: grid; grid-template-columns: 15px 5px 19px 9px 13px 13px 17px; padding-left: 4px; align-items: center; justify-items: center; }
.sym { font-size: 10px; }
.dec { font-size: 6px; line-height: 5px; font-weight: bold; }
.styles { flex: 1; }
.styles .body { padding-left: 4px; }
.cf { width: 46px; }
.ft { width: 40px; }
.gallery { flex: 1; display: flex; border: 1px solid #c0c0c0; height: 42px; margin: 1px 3px 0 0; }
.swatches { flex: 1; display: grid; grid-template-columns: repeat(5, 1fr); grid-template-rows: 15px 15px; gap: 4px; padding: 3px 2px; }
.swatches button { justify-content: flex-start; padding-left: 3px; font-size: 9px; }
.swatches .s0 { color: #555; }
.s1, .s2 { background: #f0f0f2; }
.s3 { background: #fbf4fb; }
.swatches .s4 { border: 1px solid #bbb; font-weight: bold; color: #b8b8b8; }
.swatches .s5 { background: #c8c8c8; border: 2px solid #9a9a9a; color: #fff; font-weight: bold; padding-left: 1px; }
.swatches .s6 { font-style: italic; color: #b0b0b0; }
.swatches .s7 { background: #f0f0f2; border: 1px solid #b4b4b4; color: #888; }
.swatches .s8 { border-bottom: 2px solid #d4d4d4; color: #b8b8b8; }
.swatches .s9 { border: 1px solid #ccc; color: #555; }
.spin { width: 10px; display: grid; grid-template-rows: repeat(3, 1fr); background: #f6f6f6; border-left: 1px solid #ccc; }
.spin button + button { border-top: 1px solid #ccc; }
.cells { width: 91px; }
.even { display: grid; grid-template-columns: repeat(3, 28px); padding-left: 3px; }
.edit { width: 125px; }
.edit .stack { width: 63px; padding-left: 4px; }
.sf { width: 29px; }
.rest { width: 93px; display: flex; align-items: flex-end; justify-content: flex-end; padding: 0 7px 4px 0; }

.fbar { height: 32px; flex: none; display: flex; align-items: center; background: #f7f7f7; padding: 0 4px 0 3px; font-size: 9px; }
.fbar > div { height: 17px; background: #fff; border: 1px solid #d4d4d4; display: flex; align-items: center; }
.namebox { width: 74px; padding: 0 4px; }
.namebox input { flex: 1; }
.dots { width: 20px; text-align: center; color: #999; }
.fbtns { width: 74px; justify-content: space-around; margin-right: 2px; }
.fx { font: italic bold 10px "Liberation Serif", serif; color: #555; }
.fx small { font-size: 7px; }
.finput { flex: 1; padding: 0 2px 0 7px; }
.finput input { flex: 1; }

.sheet { flex: 1; min-height: 0; display: flex; background: #f7f7f7; overflow: hidden; }
.grid { flex: 1; min-width: 0; overflow: hidden; position: relative; background: #fff; }
table { table-layout: fixed; width: 100%; border-collapse: separate; border-spacing: 0; font-family: Lato, sans-serif; font-size: 16px; font-variant-ligatures: none; line-height: 20px; color: #111; }
.rh { width: 34px; }
.tail { width: 13px; }
th, td { padding: 0; font-weight: normal; white-space: nowrap; }
thead th { height: 24px; background: #f7f7f7; border-right: 1px solid #c8c8c8; border-bottom: 1px solid #a0a0a0; font-family: "Open Sans", sans-serif; line-height: 22px; color: #222; }
thead th.last { border-right: 0; }
thead th.sel { background: #dedede; color: #217346; border-bottom: 2px solid #217346; }
.corner svg { margin: 1px 1px 0 auto; }
tbody th { background: #f7f7f7; border-right: 1px solid #a0a0a0; font-size: 15px; }
tbody th.sel { background: #dedede; color: #217346; border-right: 2px solid #217346; }
.rl { overflow: hidden; display: flex; align-items: flex-end; justify-content: center; border-bottom: 1px solid #c4c4c4; line-height: 24px; }
.rl.tall { padding-bottom: 4px; }
td { vertical-align: middle; padding-left: 3px; }
td.blank { border-right: 1px solid #a0a0a0; }
.anchor, .editing, .ref, .active { position: relative; }
.txt { position: relative; white-space: pre; }
.center { text-align: center; padding: 0; }
.title { text-align: center; padding: 0; font: 700 33px/36px Inter, sans-serif; font-feature-settings: "cv11"; color: #14265a; }
.title .txt { display: block; height: 38px; text-decoration: underline double 1px #5a6488; text-decoration-skip-ink: none; text-underline-offset: 1px; }
.heading { font-weight: bold; font-size: 17px; color: #1e4d12; }
.find { color: #1f0fb8; border: 2px solid #a9c9e8; border-right: 0; padding-left: 1px; }
.ref { background: #e6f2fd; border: 1px solid #2d5f9c; }
.editing { padding: 0; border: 1px solid #b09c22; border-right: 0; z-index: 3; }
.active { border-top: 1px solid #1d6b42; border-bottom: 1px solid #1d6b42; }
.editor { position: absolute; z-index: 2; left: 0; top: 0; height: 27px; width: 406px; padding-left: 18px; display: flex; align-items: center; background: #e9fdff; font-size: 17px; }
.beam { width: 1px; height: 24px; background: #222; }
.known { font-weight: bold; border-top: 1px solid #b4b4b4; border-left: 1px solid #b4b4b4; }
.known.red { border-right: 1px solid #b4b4b4; color: #c00d18; }
.known.green { color: #18b552; }
.grey { color: #808080; font-size: 17px; }
.raised { padding-bottom: 4px; }
.xs { border-bottom: 1px solid #b4b4b4; border-left: 2px solid #8f7fb4; }
.ys { border-bottom: 1px solid #b8a8b0; border-left: 2px solid #8f6fa8; border-right: 2px solid #a81c34; background: #fef8f8; }
.xs.first { border-top: 1px solid #6b4fa0; }
.ys.first { border-top: 1px solid #8c1838; }
.h { position: absolute; width: 4px; height: 4px; z-index: 2; }
.tl, .tr { top: -2px; }
.bl, .br { bottom: -2px; }
.tl, .bl { left: -2px; }
.tr, .br { right: -2px; }
.blue { background: #2d5f9c; }
.purple { background: #6b4fa0; }
.crimson { background: #a81c34; }
.c-blue { color: #3d6cc4; }
.c-crimson { color: #b0123c; }
.c-purple { color: #7440b0; }
.c-violet { color: #4a10b8; }
.c-red { color: #c8102e; }
.c-green { color: #1fa85a; }
.tip { position: absolute; z-index: 4; background: #fff; border: 1px solid #ccc; font: 8px/10px Roboto, sans-serif; color: #777; padding: 0 3px; height: 12px; }
.fn { left: 241px; top: 29px; }
.desc { left: 471px; top: 40px; }
.menu { position: absolute; z-index: 5; left: 387px; top: 41px; width: 83px; margin: 0; padding: 0; list-style: none; background: #fff; border: 1px solid #aaa; font: 8px/11px Roboto, sans-serif; color: #333; }
.menu li { display: flex; align-items: center; gap: 2px; height: 11px; padding-left: 2px; }
.menu .on { background: linear-gradient(90deg, transparent 13px, #0a78d4 13px); color: #fff; }
.mark { position: absolute; left: 32px; top: 30px; writing-mode: vertical-rl; transform: rotate(180deg); font: bold 28px/22px "DejaVu Sans", sans-serif; color: #f2f2f2; }
.tri { position: absolute; left: 60px; top: 38px; }
.fbox { position: absolute; z-index: 1; left: 3px; top: 31px; width: 560px; height: 62px; border: 4px double #b8b8b6; background: #fff; padding: 5px 8px; font: 17px/22px "Noto Sans", sans-serif; color: #111; }
.spot { position: absolute; z-index: 1; left: -23px; top: -1px; width: 38px; height: 38px; border-radius: 50%; background: #fffc00; mix-blend-mode: multiply; display: flex; align-items: center; justify-content: center; }
.vbar { width: 13px; flex: none; background: #ececec; display: flex; flex-direction: column; padding: 0 2px 0 1px; }
.vbar button { height: 10px; border: 1px solid #b8b8b8; background: #fff; flex: none; }
.vbar .thumb { flex: 3; background: #fff; border: 1px solid #b8b8b8; }
.vbar .down { margin-top: 168px; }

.sheets { height: 19px; flex: none; display: flex; background: #f7f7f7; border-top: 1px solid #a0a0a0; border-bottom: 1px solid #dedede; align-items: center; padding-right: 14px; }
.navs { width: 67px; padding: 0 10px; display: grid; grid-template-columns: 18px 18px; }
.stab { width: 43px; height: 18px; background: #fff; border: 1px solid #b0b0b0; border-top: 0; border-bottom: 2px solid #217346; color: #217346; font-weight: bold; }
.add { margin-left: 22px; }
.hbar { width: 488px; height: 11px; display: flex; background: #e9e9e9; }
.hbar button { width: 10px; border: 1px solid #b8b8b8; background: #fff; }
.hbar .thumb { flex: 1; background: #fff; border: 1px solid #b8b8b8; }
.hbar .end { margin-left: 32px; }
.status { height: 15px; flex: none; display: flex; align-items: center; background: #fff; padding: 0 5px 0 6px; color: #666; }
.macro { margin-left: 14px; }
.views { display: grid; grid-template-columns: repeat(3, 25px); }
.zb { width: 10px; font-size: 10px; color: #999; }
.status input { appearance: none; width: 68px; height: 1px; background: #b4b4b4; }
.status input::-webkit-slider-thumb { appearance: none; width: 2px; height: 5px; background: #b4b4b4; }
.pct { width: 27px; text-align: right; color: #b8b8b8; }

.taskbar { height: 26px; flex: none; display: flex; background: #000; color: #fff; border-right: 2px solid #333; }
.apps { width: 326px; display: grid; grid-template-columns: repeat(10, 1fr); }
.appb.open { border-bottom: 2px solid #6cb0e4; }
.appb.current { background: #343434; }
.tray { display: grid; grid-template-columns: 16px 16px 16px 17px; }
.lang { width: 24px; text-align: center; line-height: 26px; }
.clock { width: 44px; text-align: center; line-height: 12px; padding-top: 1px; }
.notif { width: 32px; }
</style>
